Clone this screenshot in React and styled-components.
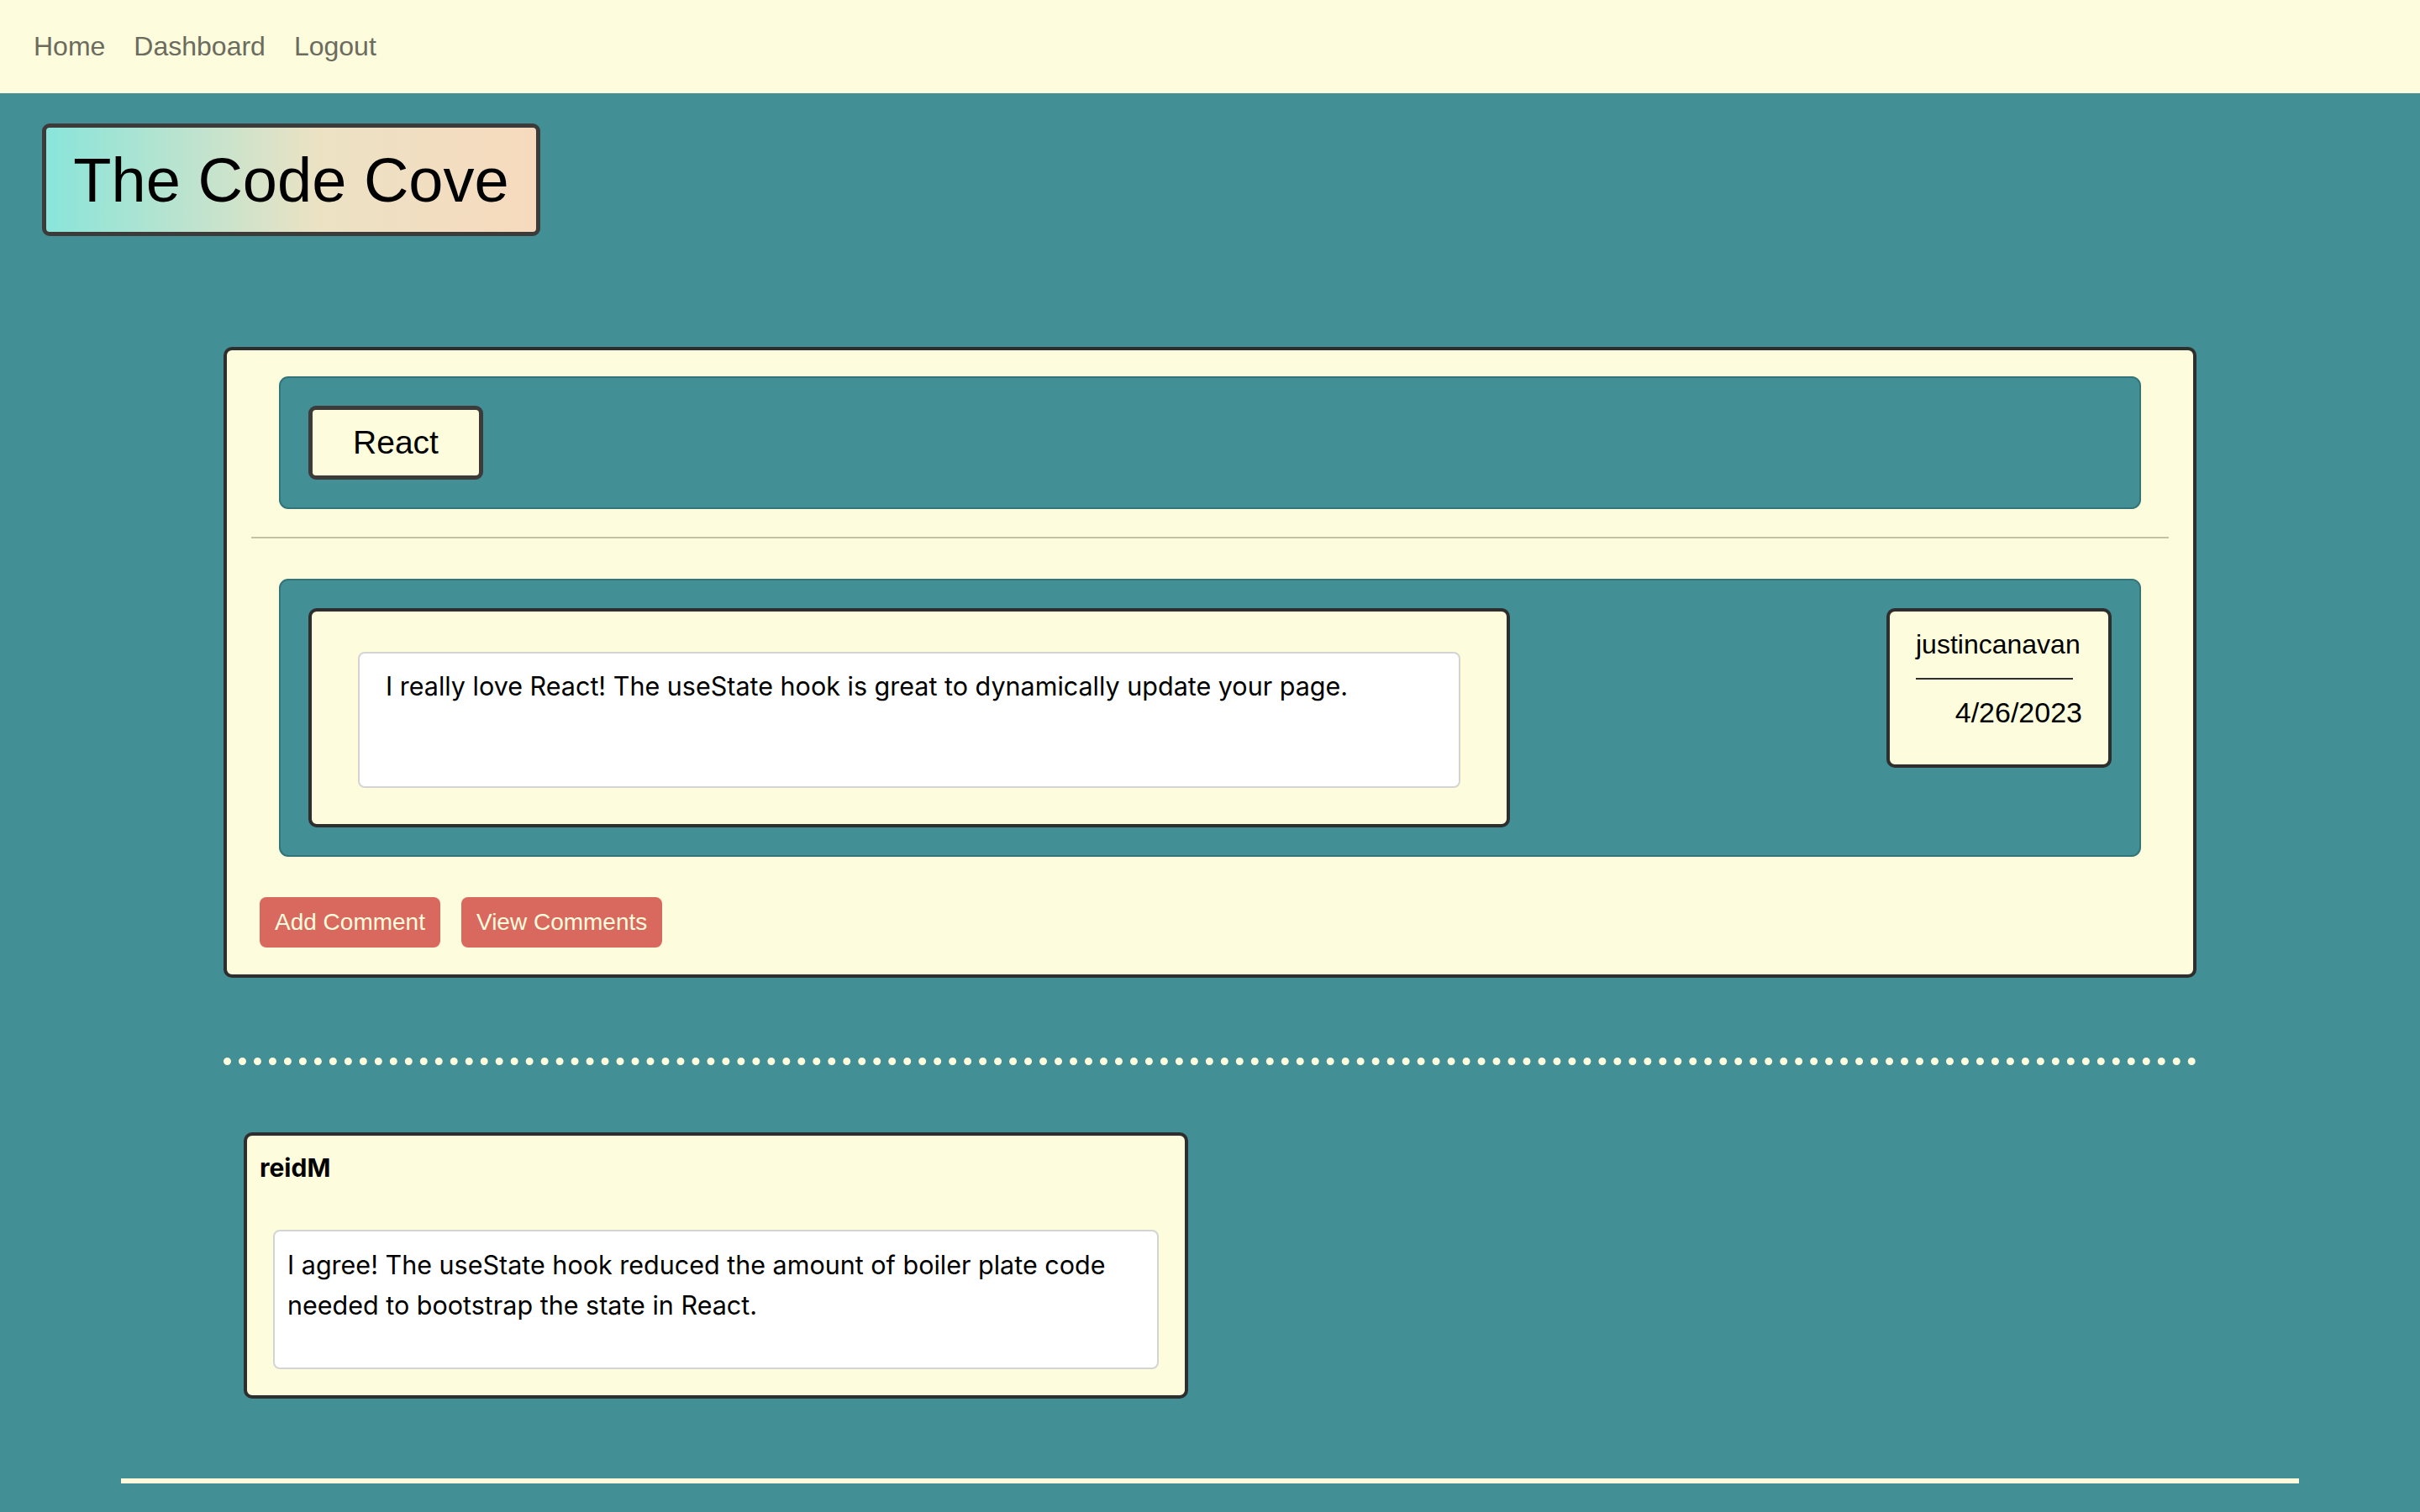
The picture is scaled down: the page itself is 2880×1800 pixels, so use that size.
import React from 'react';
import styled, { createGlobalStyle } from 'styled-components';

const cream = '#fdfcdc';
const teal = '#428f96';
const dark = '#2e2e2e';

const Global = createGlobalStyle`
  html, body { margin: 0; padding: 0; background: ${teal}; }
  body {
    font-family: "Liberation Sans", Arial, sans-serif;
    min-height: 1800px;
  }
  * { box-sizing: border-box; }
`;

const Nav = styled.nav`
  height: 111px;
  background: ${cream};
  display: flex;
  align-items: center;
  padding-left: 40px;
  gap: 34px;
`;

const NavLink = styled.a`
  font-size: 32px;
  color: #6b6b5e;
  text-decoration: none;
`;

const Header = styled.header`
  padding: 36px 0 0 50px;
`;

const Title = styled.h1`
  margin: 0;
  width: 593px;
  height: 134px;
  border: 5px solid #3d3a3a;
  border-radius: 9px;
  background: linear-gradient(to right, #89e5da 0%, #ebe2c4 55%, #f7dabe 100%);
  font-size: 74px;
  font-weight: 400;
  color: #000;
  display: flex;
  align-items: center;
  justify-content: center;
`;

const Main = styled.main`
  display: flex;
  flex-direction: column;
  align-items: center;
  padding-top: 132px;
`;

const PostCard = styled.section`
  width: 2348px;
  background: ${cream};
  border: 4px solid ${dark};
  border-radius: 10px;
  padding: 31px 29px 32px;
  display: flex;
  flex-direction: column;
`;

const TealPanel = styled.div`
  margin: 0 33px;
  background: ${teal};
  border: 2px solid #337479;
  border-radius: 11px;
  padding: 33px;
  display: flex;
  justify-content: space-between;
  align-items: flex-start;
`;

const TopicTag = styled.div`
  width: 208px;
  height: 88px;
  border: 5px solid #3d3a3a;
  border-radius: 9px;
  background: ${cream};
  display: flex;
  align-items: center;
  justify-content: center;
  font-size: 39px;
  color: #000;
`;

const Divider = styled.hr`
  margin: 33px 0 48px;
  border: none;
  height: 2px;
  background: #c4c3a8;
`;

const ContentFrame = styled.div`
  width: 1430px;
  border: 4px solid ${dark};
  border-radius: 10px;
  background: ${cream};
  padding: 48px 55px 43px;
`;

const TextBox = styled.div`
  height: ${p => p.$h}px;
  background: #fff;
  border: 2px solid #d4d4d4;
  border-radius: 8px;
  padding: ${p => p.$pad};
  font-family: Inter, "Liberation Sans", sans-serif;
  font-size: 30.5px;
  line-height: 48px;
  color: #000;
`;

const AuthorBox = styled.div`
  width: 268px;
  border: 4px solid ${dark};
  border-radius: 10px;
  background: ${cream};
  padding: 21px 31px 44px;
  display: flex;
  flex-direction: column;
  font-size: 32px;
  line-height: 36px;
  color: #000;
`;

const AuthorRule = styled.div`
  width: 187px;
  height: 2px;
  background: ${dark};
  margin: 22px 0 21px;
`;

const DateText = styled.div`
  text-align: right;
  font-size: 34px;
`;

const ButtonRow = styled.div`
  display: flex;
  gap: 25px;
  margin: 48px 0 0 10px;
`;

const ActionButton = styled.button`
  height: 60px;
  padding: 0 18px;
  border: none;
  border-radius: 8px;
  background: #d9695f;
  color: ${cream};
  font-family: "Liberation Sans", Arial, sans-serif;
  font-size: 28px;
`;

const DottedRule = styled.div`
  width: 2348px;
  margin-top: 95px;
  border-top: 9px dotted ${cream};
`;

const CommentList = styled.div`
  width: 2348px;
  padding: 80px 0 0 24px;
`;

const CommentCard = styled.div`
  width: 1124px;
  border: 4px solid ${dark};
  border-radius: 10px;
  background: ${cream};
  padding: 20px 31px 31px 15px;
`;

const CommentAuthor = styled.div`
  font-family: Inter, "Liberation Sans", sans-serif;
  font-weight: 700;
  font-size: 30px;
  line-height: 36px;
  color: #000;
  margin-bottom: 56px;
`;

const CommentBody = styled.div`
  margin-left: 16px;
`;

const Footer = styled.hr`
  width: 90%;
  margin: 95px auto 0;
  border: none;
  height: 6px;
  background: ${cream};
`;

export default function App() {
  return (
    <>
      <Global />
      <Nav>
        <NavLink href="#">Home</NavLink>
        <NavLink href="#">Dashboard</NavLink>
        <NavLink href="#">Logout</NavLink>
      </Nav>
      <Header>
        <Title>The Code Cove</Title>
      </Header>
      <Main>
        <PostCard>
          <TealPanel>
            <TopicTag>React</TopicTag>
          </TealPanel>
          <Divider />
          <TealPanel>
            <ContentFrame>
              <TextBox $h={162} $pad="15px 31px">
                I really love React! The useState hook is great to dynamically update your page.
              </TextBox>
            </ContentFrame>
            <AuthorBox>
              <div>justincanavan</div>
              <AuthorRule />
              <DateText>4/26/2023</DateText>
            </AuthorBox>
          </TealPanel>
          <ButtonRow>
            <ActionButton>Add Comment</ActionButton>
            <ActionButton>View Comments</ActionButton>
          </ButtonRow>
        </PostCard>
        <DottedRule />
        <CommentList>
          <CommentCard>
            <CommentAuthor>reidM</CommentAuthor>
            <CommentBody>
              <TextBox $h={166} $pad="16px 15px">
                I agree! The useState hook reduced the amount of boiler plate code needed to bootstrap the state in React.
              </TextBox>
            </CommentBody>
          </CommentCard>
        </CommentList>
      </Main>
      <Footer />
    </>
  );
}
